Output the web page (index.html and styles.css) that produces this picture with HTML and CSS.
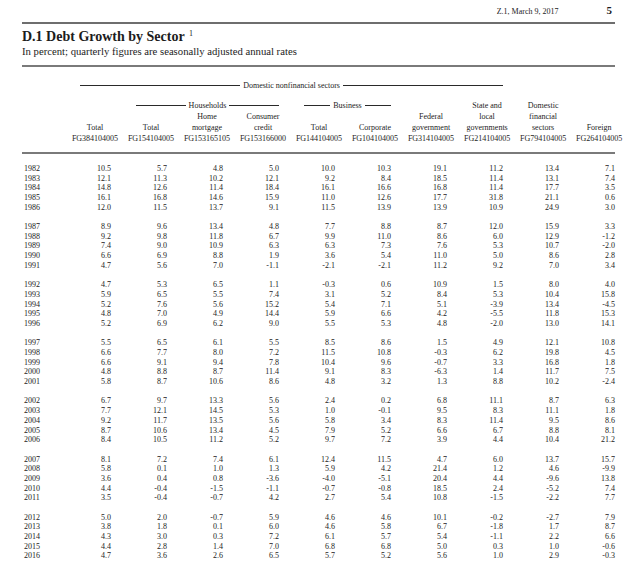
FILE: index.html
```html
<!DOCTYPE html>
<html lang="en">
<head>
<meta charset="utf-8">
<title>D.1 Debt Growth by Sector</title>
<link rel="stylesheet" href="styles.css">
</head>
<body>
<div class="page">
  <header class="runhead">
    <span class="date">Z.1, March 9, 2017</span>
    <span class="pageno">5</span>
  </header>
  <h1 class="title">D.1 Debt Growth by Sector <sup class="fn">1</sup></h1>
  <p class="subtitle">In percent; quarterly figures are seasonally adjusted annual rates</p>

  <div class="rule rule-top"></div>
  <table class="grid head">
    <colgroup><col class="c-year"><col span="10" class="c-num"></colgroup>
    <tr class="span1">
      <th></th>
      <th colspan="8"><span class="spanner">Domestic nonfinancial sectors</span></th>
      <th></th><th></th>
    </tr>
    <tr class="span2">
      <th></th>
      <th rowspan="2">Total</th>
      <th colspan="3"><span class="spanner">Households</span></th>
      <th colspan="2"><span class="spanner">Business</span></th>
      <th rowspan="2">Federal<br>government</th>
      <th rowspan="2">State and<br>local<br>governments</th>
      <th rowspan="2">Domestic<br>financial<br>sectors</th>
      <th rowspan="2">Foreign</th>
    </tr>
    <tr>
      <th></th>
      <th>Total</th>
      <th>Home<br>mortgage</th>
      <th>Consumer<br>credit</th>
      <th>Total</th>
      <th>Corporate</th>
    </tr>
    <tr class="codes">
      <th></th>
      <th>FG384104005</th><th>FG154104005</th><th>FG153165105</th><th>FG153166000</th><th>FG144104005</th>
      <th>FG104104005</th><th>FG314104005</th><th>FG214104005</th><th>FG794104005</th><th>FG264104005</th>
    </tr>
  </table>
  <div class="rule rule-mid"></div>

  <table class="grid body">
    <colgroup><col class="c-year"><col span="10" class="c-num"></colgroup>
    <tbody>
      <tr><td>1982</td><td>10.5</td><td>5.7</td><td>4.8</td><td>5.0</td><td>10.0</td><td>10.3</td><td>19.1</td><td>11.2</td><td>13.4</td><td>7.1</td></tr>
      <tr><td>1983</td><td>12.1</td><td>11.3</td><td>10.2</td><td>12.1</td><td>9.2</td><td>8.4</td><td>18.5</td><td>11.4</td><td>13.1</td><td>7.4</td></tr>
      <tr><td>1984</td><td>14.8</td><td>12.6</td><td>11.4</td><td>18.4</td><td>16.1</td><td>16.6</td><td>16.8</td><td>11.4</td><td>17.7</td><td>3.5</td></tr>
      <tr><td>1985</td><td>16.1</td><td>16.8</td><td>14.6</td><td>15.9</td><td>11.0</td><td>12.6</td><td>17.7</td><td>31.8</td><td>21.1</td><td>0.6</td></tr>
      <tr><td>1986</td><td>12.0</td><td>11.5</td><td>13.7</td><td>9.1</td><td>11.5</td><td>13.9</td><td>13.9</td><td>10.9</td><td>24.9</td><td>3.0</td></tr>
    </tbody>
    <tbody>
      <tr><td>1987</td><td>8.9</td><td>9.6</td><td>13.4</td><td>4.8</td><td>7.7</td><td>8.8</td><td>8.7</td><td>12.0</td><td>15.9</td><td>3.3</td></tr>
      <tr><td>1988</td><td>9.2</td><td>9.8</td><td>11.8</td><td>6.7</td><td>9.9</td><td>11.0</td><td>8.6</td><td>6.0</td><td>12.9</td><td>-1.2</td></tr>
      <tr><td>1989</td><td>7.4</td><td>9.0</td><td>10.9</td><td>6.3</td><td>6.3</td><td>7.3</td><td>7.6</td><td>5.3</td><td>10.7</td><td>-2.0</td></tr>
      <tr><td>1990</td><td>6.6</td><td>6.9</td><td>8.8</td><td>1.9</td><td>3.6</td><td>5.4</td><td>11.0</td><td>5.0</td><td>8.6</td><td>2.8</td></tr>
      <tr><td>1991</td><td>4.7</td><td>5.6</td><td>7.0</td><td>-1.1</td><td>-2.1</td><td>-2.1</td><td>11.2</td><td>9.2</td><td>7.0</td><td>3.4</td></tr>
    </tbody>
    <tbody>
      <tr><td>1992</td><td>4.7</td><td>5.3</td><td>6.5</td><td>1.1</td><td>-0.3</td><td>0.6</td><td>10.9</td><td>1.5</td><td>8.0</td><td>4.0</td></tr>
      <tr><td>1993</td><td>5.9</td><td>6.5</td><td>5.5</td><td>7.4</td><td>3.1</td><td>5.2</td><td>8.4</td><td>5.3</td><td>10.4</td><td>15.8</td></tr>
      <tr><td>1994</td><td>5.2</td><td>7.6</td><td>5.6</td><td>15.2</td><td>5.4</td><td>7.1</td><td>5.1</td><td>-3.9</td><td>13.4</td><td>-4.5</td></tr>
      <tr><td>1995</td><td>4.8</td><td>7.0</td><td>4.9</td><td>14.4</td><td>5.9</td><td>6.6</td><td>4.2</td><td>-5.5</td><td>11.8</td><td>15.3</td></tr>
      <tr><td>1996</td><td>5.2</td><td>6.9</td><td>6.2</td><td>9.0</td><td>5.5</td><td>5.3</td><td>4.8</td><td>-2.0</td><td>13.0</td><td>14.1</td></tr>
    </tbody>
    <tbody>
      <tr><td>1997</td><td>5.5</td><td>6.5</td><td>6.1</td><td>5.5</td><td>8.5</td><td>8.6</td><td>1.5</td><td>4.9</td><td>12.1</td><td>10.8</td></tr>
      <tr><td>1998</td><td>6.6</td><td>7.7</td><td>8.0</td><td>7.2</td><td>11.5</td><td>10.8</td><td>-0.3</td><td>6.2</td><td>19.8</td><td>4.5</td></tr>
      <tr><td>1999</td><td>6.6</td><td>9.1</td><td>9.4</td><td>7.8</td><td>10.4</td><td>9.6</td><td>-0.7</td><td>3.3</td><td>16.8</td><td>1.8</td></tr>
      <tr><td>2000</td><td>4.8</td><td>8.8</td><td>8.7</td><td>11.4</td><td>9.1</td><td>8.3</td><td>-6.3</td><td>1.4</td><td>11.7</td><td>7.5</td></tr>
      <tr><td>2001</td><td>5.8</td><td>8.7</td><td>10.6</td><td>8.6</td><td>4.8</td><td>3.2</td><td>1.3</td><td>8.8</td><td>10.2</td><td>-2.4</td></tr>
    </tbody>
    <tbody>
      <tr><td>2002</td><td>6.7</td><td>9.7</td><td>13.3</td><td>5.6</td><td>2.4</td><td>0.2</td><td>6.8</td><td>11.1</td><td>8.7</td><td>6.3</td></tr>
      <tr><td>2003</td><td>7.7</td><td>12.1</td><td>14.5</td><td>5.3</td><td>1.0</td><td>-0.1</td><td>9.5</td><td>8.3</td><td>11.1</td><td>1.8</td></tr>
      <tr><td>2004</td><td>9.2</td><td>11.7</td><td>13.5</td><td>5.6</td><td>5.8</td><td>3.4</td><td>8.3</td><td>11.4</td><td>9.5</td><td>8.6</td></tr>
      <tr><td>2005</td><td>8.7</td><td>10.6</td><td>13.4</td><td>4.5</td><td>7.9</td><td>5.2</td><td>6.6</td><td>6.7</td><td>8.8</td><td>8.1</td></tr>
      <tr><td>2006</td><td>8.4</td><td>10.5</td><td>11.2</td><td>5.2</td><td>9.7</td><td>7.2</td><td>3.9</td><td>4.4</td><td>10.4</td><td>21.2</td></tr>
    </tbody>
    <tbody>
      <tr><td>2007</td><td>8.1</td><td>7.2</td><td>7.4</td><td>6.1</td><td>12.4</td><td>11.5</td><td>4.7</td><td>6.0</td><td>13.7</td><td>15.7</td></tr>
      <tr><td>2008</td><td>5.8</td><td>0.1</td><td>1.0</td><td>1.3</td><td>5.9</td><td>4.2</td><td>21.4</td><td>1.2</td><td>4.6</td><td>-9.9</td></tr>
      <tr><td>2009</td><td>3.6</td><td>0.4</td><td>0.8</td><td>-3.6</td><td>-4.0</td><td>-5.1</td><td>20.4</td><td>4.4</td><td>-9.6</td><td>13.8</td></tr>
      <tr><td>2010</td><td>4.4</td><td>-0.4</td><td>-1.5</td><td>-1.1</td><td>-0.7</td><td>-0.8</td><td>18.5</td><td>2.4</td><td>-5.2</td><td>7.4</td></tr>
      <tr><td>2011</td><td>3.5</td><td>-0.4</td><td>-0.7</td><td>4.2</td><td>2.7</td><td>5.4</td><td>10.8</td><td>-1.5</td><td>-2.2</td><td>7.7</td></tr>
    </tbody>
    <tbody>
      <tr><td>2012</td><td>5.0</td><td>2.0</td><td>-0.7</td><td>5.9</td><td>4.6</td><td>4.6</td><td>10.1</td><td>-0.2</td><td>-2.7</td><td>7.9</td></tr>
      <tr><td>2013</td><td>3.8</td><td>1.8</td><td>0.1</td><td>6.0</td><td>4.6</td><td>5.8</td><td>6.7</td><td>-1.8</td><td>1.7</td><td>8.7</td></tr>
      <tr><td>2014</td><td>4.3</td><td>3.0</td><td>0.3</td><td>7.2</td><td>6.1</td><td>5.7</td><td>5.4</td><td>-1.1</td><td>2.2</td><td>6.6</td></tr>
      <tr><td>2015</td><td>4.4</td><td>2.8</td><td>1.4</td><td>7.0</td><td>6.8</td><td>6.8</td><td>5.0</td><td>0.3</td><td>1.0</td><td>-0.6</td></tr>
      <tr><td>2016</td><td>4.7</td><td>3.6</td><td>2.6</td><td>6.5</td><td>5.7</td><td>5.2</td><td>5.6</td><td>1.0</td><td>2.9</td><td>-0.3</td></tr>
    </tbody>
  </table>
</div>
</body>
</html>
```

FILE: styles.css
```css
html, body {
  margin: 0;
  padding: 0;
  background: #ffffff;
}

body {
  font-family: "Liberation Serif", "Times New Roman", serif;
  color: #1c1c1c;
  font-size: 8px;
}

.page {
  width: 593px;
  padding: 0 0 0 22px;
}

/* running head */
.runhead {
  display: flex;
  justify-content: flex-end;
  align-items: baseline;
  gap: 48px;
  box-sizing: border-box;
  height: 24px;
  padding: 5px 3px 0 0;
  line-height: 11px;
  border-bottom: 2px solid #6e6e6e;
}

.date {
  font-size: 8px;
}

.pageno {
  font-size: 11px;
  font-weight: bold;
}

.title {
  margin: 5px 0 0 0;
  font-size: 14px;
  line-height: 16px;
  font-weight: bold;
}

.fn {
  font-size: 8px;
  font-weight: normal;
  vertical-align: 5px;
  line-height: 0;
  margin-left: 1px;
}

.subtitle {
  margin: 0;
  font-size: 10.7px;
  line-height: 12px;
}

/* rules */
.rule {
  height: 0;
  border-top: 2px solid #7a7a7a;
}

.rule-top {
  margin-top: 8px;
}

/* tables */
.grid {
  border-collapse: collapse;
  border-spacing: 0;
  table-layout: fixed;
  width: 605px;
}

.c-year {
  width: 45px;
}

.c-num {
  width: 56px;
}

.head th {
  font-weight: normal;
  text-align: center;
  vertical-align: bottom;
  padding: 0;
  line-height: 11px;
  white-space: nowrap;
}

.head .span1 th {
  padding-top: 13px;
  padding-bottom: 9px;
}

.head .codes th {
  padding-bottom: 8px;
}

.spanner {
  display: flex;
  align-items: center;
  gap: 3px;
  padding: 0 12px 0 13px;
}

.spanner::before,
.spanner::after {
  content: "";
  flex: 1;
  border-top: 1px solid #2a2a2a;
}

.body {
  margin-top: 10px;
}

.body td {
  padding: 0 12px 0 0;
  line-height: 9.68px;
  height: 9.68px;
  text-align: right;
  white-space: nowrap;
}

.body td:first-child {
  text-align: left;
  padding: 0 0 0 2px;
}

.body tbody + tbody tr:first-child td {
  padding-top: 9.68px;
}
```
